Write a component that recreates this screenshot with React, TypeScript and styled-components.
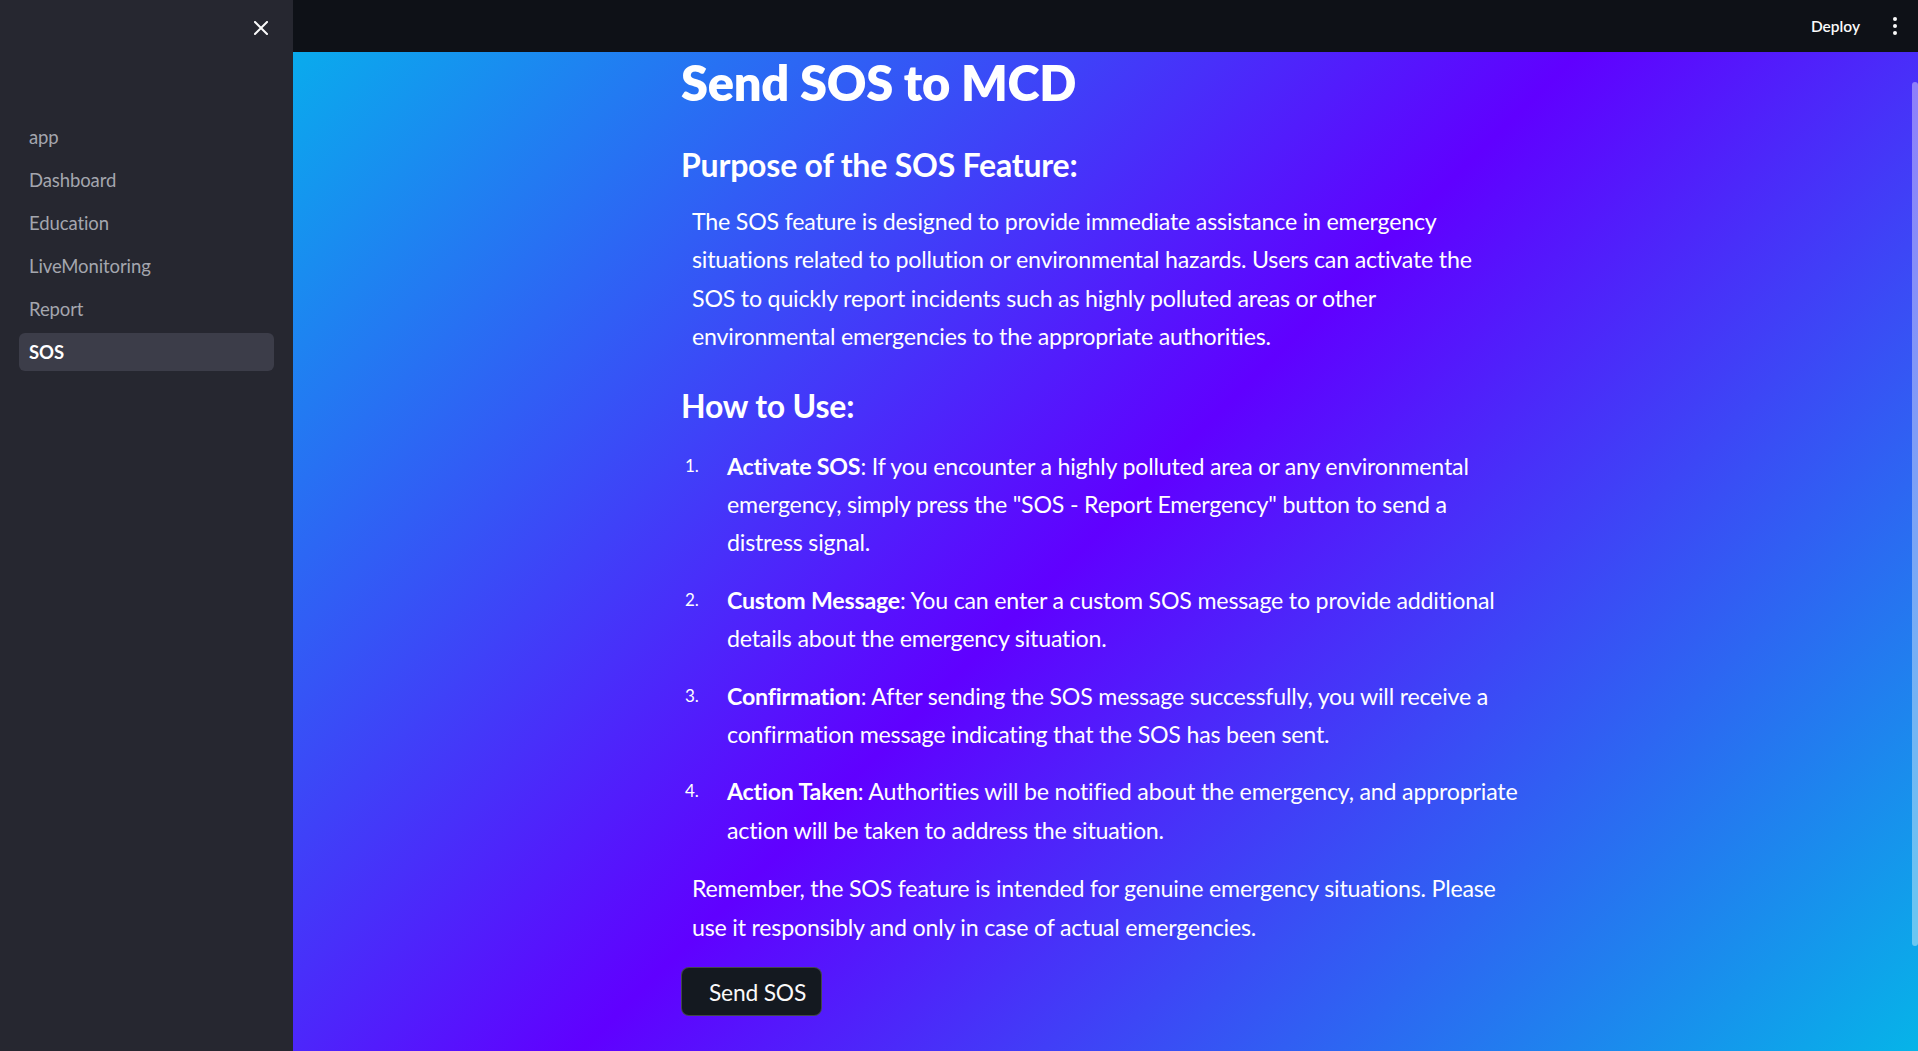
import React from "react";
import styled, { createGlobalStyle } from "styled-components";

const GlobalStyle = createGlobalStyle`
  html, body { margin: 0; padding: 0; height: 100%; overflow: hidden; }
  body { font-family: Lato, "Noto Sans", sans-serif; background: #0e1117; }
  #root { height: 100%; }
  * { box-sizing: border-box; }
`;

const Shell = styled.div`
  display: grid;
  grid-template-columns: 293px 1fr;
  height: 1051px;
  width: 1918px;
`;

const Sidebar = styled.aside`
  background: #262730;
  display: flex;
  flex-direction: column;
  padding: 19px 19px 0 19px;
`;

const SidebarTop = styled.div`
  display: flex;
  justify-content: flex-end;
  height: 99px;
  padding-right: 2px;
`;

const CloseButton = styled.button`
  width: 22px;
  height: 18px;
  padding: 0;
  border: 0;
  background: transparent;
  display: flex;
  align-items: center;
  justify-content: center;
  color: #fafafa;
`;

const Nav = styled.nav`
  display: flex;
  flex-direction: column;
  gap: 5px;
`;

const NavItem = styled.a<{ $active?: boolean }>`
  display: flex;
  align-items: center;
  height: 38px;
  padding-left: 10px;
  border-radius: 6px;
  font-family: Lato, "Noto Sans", sans-serif;
  font-size: 18.5px;
  letter-spacing: -0.1px;
  color: ${(p) => (p.$active ? "#ffffff" : "#a4a6ae")};
  font-weight: ${(p) => (p.$active ? 700 : 400)};
  background: ${(p) => (p.$active ? "#3c3d49" : "transparent")};
`;

const Main = styled.main`
  position: relative;
  display: flex;
  flex-direction: column;
  background: linear-gradient(135deg, #06b2ec 0%, #6000ff 50%, #06b4e8 100%);
  overflow: hidden;
`;

const Header = styled.header`
  height: 52px;
  flex: none;
  background: #0e1117;
  display: flex;
  align-items: center;
  justify-content: flex-end;
  padding-right: 21px;
  gap: 33px;
`;

const DeployButton = styled.span`
  font-family: Lato, "Noto Sans", sans-serif;
  font-size: 15.5px;
  font-weight: 600;
  color: #fafafa;
`;

const Kebab = styled.span`
  display: flex;
  flex-direction: column;
  gap: 3px;
  width: 4px;
`;

const Dot = styled.span`
  width: 4px;
  height: 4px;
  border-radius: 50%;
  background: #fafafa;
`;

const Body = styled.div`
  flex: 1;
  display: flex;
  justify-content: center;
`;

const Content = styled.div`
  width: 849px;
  display: flex;
  flex-direction: column;
  color: #ffffff;
`;

const Title = styled.h1`
  margin: -2px 0 0 0;
  font-family: Lato, "Noto Sans", sans-serif;
  font-weight: 800;
  font-size: 48.8px;
  line-height: 65px;
  letter-spacing: -0.3px;
`;

const SectionTitle = styled.h3<{ $after?: number }>`
  margin: 30px 0 ${(p) => p.$after ?? 17}px 0;
  font-family: Lato, "Noto Sans", sans-serif;
  font-weight: 700;
  font-size: 32px;
  line-height: 40px;
  letter-spacing: -0.2px;
`;

const Para = styled.p<{ $top?: number }>`
  margin: ${(p) => p.$top ?? 0}px 0 0 0;
  padding-left: 11px;
  font-family: Lato, "Noto Sans", sans-serif;
  font-size: 23.2px;
  line-height: 38.4px;
  white-space: nowrap;
  letter-spacing: -0.2px;
`;

const List = styled.ol`
  list-style: none;
  margin: 0;
  padding: 0;
  display: flex;
  flex-direction: column;
  gap: 19px;
`;

const Item = styled.li`
  display: grid;
  grid-template-columns: 46px 1fr;
  font-family: Lato, "Noto Sans", sans-serif;
  font-size: 23.2px;
  line-height: 38.4px;
  letter-spacing: -0.2px;
  white-space: nowrap;
`;

const Num = styled.span`
  font-size: 17px;
  padding-left: 4px;
`;

const Strong = styled.b`
  font-weight: 700;
`;

const SendButton = styled.button`
  align-self: flex-start;
  margin-top: 21px;
  height: 49px;
  padding: 0 15px 0 27px;
  background: #141920;
  border: 1px solid rgba(250, 250, 250, 0.2);
  border-radius: 8px;
  color: #fafafa;
  font-family: Lato, "Noto Sans", sans-serif;
  font-size: 22.8px;
  letter-spacing: -0.2px;
`;

const ScrollThumb = styled.div`
  position: absolute;
  right: 0;
  top: 82px;
  width: 6px;
  height: 864px;
  border-radius: 3px;
  background: rgba(255, 255, 255, 0.38);
`;

const navItems = ["app", "Dashboard", "Education", "LiveMonitoring", "Report", "SOS"];

const steps: { title: string; lines: string[] }[] = [
  {
    title: "Activate SOS",
    lines: [
      ": If you encounter a highly polluted area or any environmental",
      'emergency, simply press the "SOS - Report Emergency" button to send a',
      "distress signal.",
    ],
  },
  {
    title: "Custom Message",
    lines: [
      ": You can enter a custom SOS message to provide additional",
      "details about the emergency situation.",
    ],
  },
  {
    title: "Confirmation",
    lines: [
      ": After sending the SOS message successfully, you will receive a",
      "confirmation message indicating that the SOS has been sent.",
    ],
  },
  {
    title: "Action Taken",
    lines: [
      ": Authorities will be notified about the emergency, and appropriate",
      "action will be taken to address the situation.",
    ],
  },
];

export default function App() {
  return (
    <>
      <GlobalStyle />
      <Shell>
        <Sidebar>
          <SidebarTop>
            <CloseButton aria-label="Close sidebar">
              <svg width="14" height="14" viewBox="0 0 14 14">
                <path d="M1 1 L13 13 M13 1 L1 13" stroke="#fafafa" strokeWidth="2" strokeLinecap="square" />
              </svg>
            </CloseButton>
          </SidebarTop>
          <Nav>
            {navItems.map((n) => (
              <NavItem key={n} $active={n === "SOS"}>
                {n}
              </NavItem>
            ))}
          </Nav>
        </Sidebar>
        <Main>
          <Header>
            <DeployButton>Deploy</DeployButton>
            <Kebab>
              <Dot />
              <Dot />
              <Dot />
            </Kebab>
          </Header>
          <Body>
            <Content>
              <Title>Send SOS to MCD</Title>
              <SectionTitle>Purpose of the SOS Feature:</SectionTitle>
              <Para>
                The SOS feature is designed to provide immediate assistance in emergency
                <br />
                situations related to pollution or environmental hazards. Users can activate the
                <br />
                SOS to quickly report incidents such as highly polluted areas or other
                <br />
                environmental emergencies to the appropriate authorities.
              </Para>
              <SectionTitle $after={21}>How to Use:</SectionTitle>
              <List>
                {steps.map((s, i) => (
                  <Item key={s.title}>
                    <Num>{i + 1}.</Num>
                    <span>
                      <Strong>{s.title}</Strong>
                      {s.lines.map((l, j) => (
                        <React.Fragment key={j}>
                          {j > 0 && <br />}
                          {l}
                        </React.Fragment>
                      ))}
                    </span>
                  </Item>
                ))}
              </List>
              <Para $top={20}>
                Remember, the SOS feature is intended for genuine emergency situations. Please
                <br />
                use it responsibly and only in case of actual emergencies.
              </Para>
              <SendButton>Send SOS</SendButton>
            </Content>
          </Body>
          <ScrollThumb />
        </Main>
      </Shell>
    </>
  );
}
